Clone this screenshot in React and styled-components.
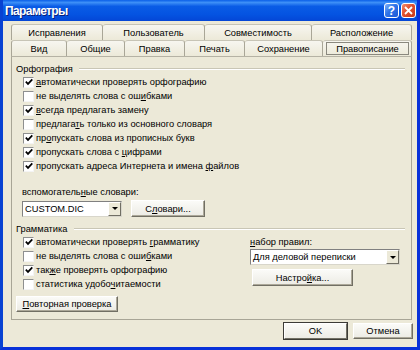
import React from 'react';
import styled, {createGlobalStyle} from 'styled-components';

const GlobalStyle = createGlobalStyle`
  html, body {
    margin: 0;
    padding: 0;
    background: #ECE9D8;
  }
  body {
    font-family: "Liberation Sans", Arial, sans-serif;
    font-size: 9.3px;
    color: #000;
  }
`;

const Window = styled.div`
  width: 420px;
  height: 350px;
  box-sizing: border-box;
  display: flex;
  flex-direction: column;
  background: #ECE9D8;
  border-left: 3px solid #0842D2;
  border-right: 3px solid #0831D9;
  border-bottom: 3px solid #0831D9;
  overflow: hidden;
`;

const TitleBar = styled.div`
  height: 21px;
  margin: 0 -3px;
  flex: none;
  display: flex;
  align-items: center;
  justify-content: space-between;
  padding: 0 4px 0 5px;
  background: linear-gradient(to bottom, #0A5FE8 0%, #3D8FF7 12%, #0A5CE6 30%, #0453E1 70%, #0446D6 100%);
`;

const Title = styled.span`
  color: #fff;
  font-weight: bold;
  font-size: 12px;
  letter-spacing: -0.6px;
  text-shadow: 1px 1px 0 #0A1F7A;
`;

const Caption = styled.div`
  display: flex;
  gap: 2px;
`;

const CapBtn = styled.div`
  width: 15px;
  height: 15px;
  box-sizing: border-box;
  border: 1px solid #fff;
  border-radius: 3px;
  display: flex;
  align-items: center;
  justify-content: center;
  color: #fff;
  font-weight: bold;
  font-size: 12px;
  background: ${p => p.$close
    ? 'linear-gradient(135deg, #F08B6E 0%, #E0502E 45%, #C73A1B 100%)'
    : 'linear-gradient(135deg, #7FB1FA 0%, #2F74E8 45%, #1D58D6 100%)'};
`;

const Body = styled.div`
  flex: 1;
  display: flex;
  flex-direction: column;
  padding-top: 3px;
`;

const TabRow = styled.div`
  display: flex;
  margin-left: 8px;
  width: 401px;
  height: 16px;
`;

const Tab = styled.div`
  width: ${p => p.$w}px;
  box-sizing: border-box;
  display: flex;
  align-items: center;
  justify-content: center;
  border-top: 1px solid #C7C4B6;
  border-right: 1px solid #A9A697;
  border-left: ${p => (p.$first ? '1px solid #A9A697' : 'none')};
  border-radius: 3px 3px 0 0;
  background: linear-gradient(to bottom, #F7F6F0, #ECE9D8);
  position: relative;
  padding-top: 1px;
`;

const TabFocus = styled.span`
  position: absolute;
  inset: 1px 2px 1px 3px;
  border: 1px solid #8A887E;
  display: flex;
  align-items: center;
  justify-content: center;
`;

const Panel = styled.div`
  margin: 0 5px 0 8px;
  height: 264px;
  box-sizing: border-box;
  border: 1px solid #A8A596;
  border-top-color: #B5B2A4;
  display: flex;
  flex-direction: column;
`;

const GroupHead = styled.div`
  display: flex;
  align-items: center;
  height: 12px;
  margin: ${p => p.$top}px 6px 0 4px;
  gap: 6px;
  &::after {
    content: "";
    flex: 1;
    height: 0;
    border-top: 1px solid #C9C6B5;
    border-bottom: 1px solid #fff;
  }
`;

const CheckList = styled.div`
  display: flex;
  flex-direction: column;
  margin-left: 11px;
  width: ${p => (p.$w ? `${p.$w}px` : 'auto')};
`;

const CheckRow = styled.div`
  height: 14px;
  display: flex;
  align-items: center;
  white-space: nowrap;
`;

const Box = styled.span`
  width: 11px;
  height: 11px;
  box-sizing: border-box;
  margin-right: 2px;
  background: #fff;
  border-top: 1px solid #8E8F8F;
  border-left: 1px solid #8E8F8F;
  border-right: 1px solid #F4F4F4;
  border-bottom: 1px solid #F4F4F4;
  display: flex;
  align-items: center;
  justify-content: center;
`;

const Label = styled.div`
  height: 12px;
  line-height: 12px;
  margin: ${p => p.$top || 0}px 0 0 ${p => p.$left || 0}px;
`;

const ComboRow = styled.div`
  display: flex;
  align-items: center;
  gap: 9px;
  margin: 2px 0 0 10px;
`;

const Combo = styled.div`
  width: ${p => p.$w}px;
  height: 16px;
  box-sizing: border-box;
  background: #fff;
  border-top: 1px solid #808080;
  border-left: 1px solid #808080;
  border-right: 1px solid #D8D6CB;
  border-bottom: 1px solid #D8D6CB;
  display: flex;
  align-items: center;
  padding-left: 2px;
  margin-top: ${p => p.$top || 0}px;
`;

const ComboText = styled.span`
  flex: 1;
`;

const Arrow = styled.span`
  width: 13px;
  height: 14px;
  box-sizing: border-box;
  background: #ECE9D8;
  border-left: 1px solid #fff;
  border-top: 1px solid #fff;
  border-right: 1px solid #716F64;
  border-bottom: 1px solid #716F64;
  display: flex;
  align-items: center;
  justify-content: center;
  &::after {
    content: "";
    border-left: 3px solid transparent;
    border-right: 3px solid transparent;
    border-top: 3px solid #000;
  }
`;

const Button = styled.div`
  width: ${p => p.$w}px;
  height: ${p => p.$h || 17}px;
  box-sizing: border-box;
  display: flex;
  align-items: center;
  justify-content: center;
  background: linear-gradient(to bottom, #FBFBF8, #ECEBE4);
  border-top: 1px solid #fff;
  border-left: 1px solid #fff;
  border-right: 1px solid #716F64;
  border-bottom: 1px solid #716F64;
  box-shadow: ${p => (p.$default ? '0 0 0 1px #3C3B36' : 'inset -1px -1px 0 #ACA899')};
  margin: ${p => p.$margin || 0};
`;

const Grammar = styled.div`
  display: flex;
`;

const RulesCol = styled.div`
  display: flex;
  flex-direction: column;
`;

const Footer = styled.div`
  flex: 1;
  display: flex;
  justify-content: flex-end;
  align-items: flex-start;
  gap: 6px;
  padding: 3px 4px 0 0;
`;

const Check = () => (
  <svg width="8" height="8" viewBox="0 0 8 8">
    <path d="M0.8 3.6 L3 5.9 L7.3 1.3" fill="none" stroke="#000" strokeWidth="1.7"/>
  </svg>
);

const CheckBox = ({on, children}) => (
  <CheckRow>
    <Box>{on && <Check/>}</Box>
    <span>{children}</span>
  </CheckRow>
);

const backTabs = [
  {t: 'Исправления', w: 92},
  {t: 'Пользователь', w: 102},
  {t: 'Совместимость', w: 107},
  {t: 'Расположение', w: 100},
];

const frontTabs = [
  {t: 'Вид', w: 56},
  {t: 'Общие', w: 58},
  {t: 'Правка', w: 60},
  {t: 'Печать', w: 60},
  {t: 'Сохранение', w: 78},
  {t: 'Правописание', w: 89, active: true},
];

export default function App() {
  return (
    <>
      <GlobalStyle/>
      <Window>
        <TitleBar>
          <Title>Параметры</Title>
          <Caption>
            <CapBtn>?</CapBtn>
            <CapBtn $close>
              <svg width="9" height="9" viewBox="0 0 9 9">
                <path d="M1 1 L8 8 M8 1 L1 8" stroke="#fff" strokeWidth="1.8"/>
              </svg>
            </CapBtn>
          </Caption>
        </TitleBar>
        <Body>
          <TabRow>
            {backTabs.map((tab, i) => (
              <Tab key={tab.t} $w={tab.w} $first={i === 0}>{tab.t}</Tab>
            ))}
          </TabRow>
          <TabRow>
            {frontTabs.map((tab, i) => (
              <Tab key={tab.t} $w={tab.w} $first={i === 0}>
                {tab.active ? <TabFocus>{tab.t}</TabFocus> : tab.t}
              </Tab>
            ))}
          </TabRow>
          <Panel>
            <GroupHead $top={6}>Орфография</GroupHead>
            <CheckList>
              <CheckBox on><u>а</u>втоматически проверять орфографию</CheckBox>
              <CheckBox>не выделять слова с ош<u>и</u>бками</CheckBox>
              <CheckBox on><u>в</u>сегда предлагать замену</CheckBox>
              <CheckBox>предлага<u>т</u>ь только из основного словаря</CheckBox>
              <CheckBox on>пр<u>о</u>пускать слова из прописных букв</CheckBox>
              <CheckBox on>пропускать слова с <u>ц</u>ифрами</CheckBox>
              <CheckBox on>пропускать адреса Интернета и имена <u>ф</u>айлов</CheckBox>
            </CheckList>
            <Label $top={13} $left={10}>вспомогатель<u>н</u>ые словари:</Label>
            <ComboRow>
              <Combo $w={100}>
                <ComboText>CUSTOM.DIC</ComboText>
                <Arrow/>
              </Combo>
              <Button $w={74}>С<u>л</u>овари...</Button>
            </ComboRow>
            <GroupHead $top={6}>Грамматика</GroupHead>
            <Grammar>
              <CheckList $w={227}>
                <CheckBox on>автоматически проверять <u>г</u>рамматику</CheckBox>
                <CheckBox>не выделять слова с оши<u>б</u>ками</CheckBox>
                <CheckBox on>так<u>ж</u>е проверять орфографию</CheckBox>
                <CheckBox>статистика удобо<u>ч</u>итаемости</CheckBox>
              </CheckList>
              <RulesCol>
                <Label $top={1}><u>н</u>абор правил:</Label>
                <Combo $w={150} $top={1}>
                  <ComboText>Для деловой переписки</ComboText>
                  <Arrow/>
                </Combo>
                <Button $w={101} $margin="4px 0 0 2px"><span>Настро<u>й</u>ка...</span></Button>
              </RulesCol>
            </Grammar>
            <Button $w={102} $h={16} $margin="5px 0 0 4px"><span><u>П</u>овторная проверка</span></Button>
          </Panel>
          <Footer>
            <Button $w={63} $h={16} $default>OK</Button>
            <Button $w={60} $h={16}>Отмена</Button>
          </Footer>
        </Body>
      </Window>
    </>
  );
}
